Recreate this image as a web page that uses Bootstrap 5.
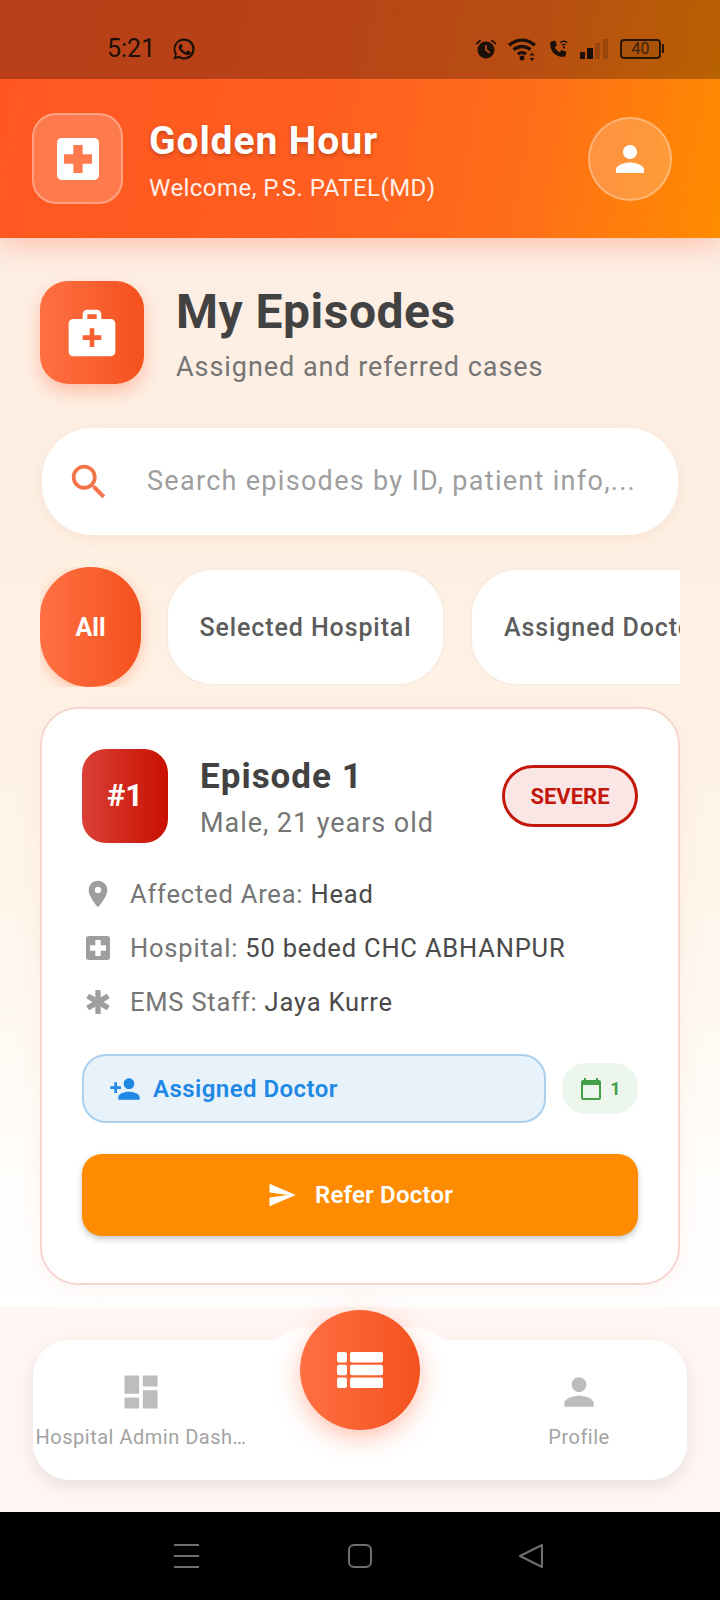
<!DOCTYPE html>
<html lang="en">
<head>
    <meta charset="UTF-8">
    <meta name="viewport" content="width=device-width, initial-scale=1">
    <title>Golden Hour - My Episodes</title>
    <link href="https://cdn.jsdelivr.net/npm/bootstrap@5.3.0/dist/css/bootstrap.min.css" rel="stylesheet">
    <style>
        body {
            font-family: "Roboto", "Liberation Sans", sans-serif;
            width: 720px;
            height: 1600px;
            overflow: hidden;
            background: #fff;
            color: #424242;
        }

        svg { fill: currentColor; display: block; flex-shrink: 0; }

        .app-screen { height: 1600px; }

        /* header + status bar share one gradient */
        .top-area {
            background: linear-gradient(100deg, #ff5722 0%, #ff5e20 45%, #ff6d1a 72%, #ff8c00 100%);
            box-shadow: 0 8px 26px rgba(255, 87, 34, .28);
            position: relative;
            z-index: 2;
        }
        .status-strip {
            height: 79px;
            padding: 18px 56px 0 107px;
            background: rgba(0, 0, 0, .28);
            color: #1d1008;
        }
        .status-time { font-size: 25px; line-height: 30px; width: 65px; }
        .status-icons { gap: 10px; }
        .batt-box {
            width: 41px;
            height: 20px;
            border: 2px solid #2a1505;
            border-radius: 4px;
            font-size: 16px;
            line-height: 16px;
            text-align: center;
            color: #3a2208;
            background: rgba(0, 0, 0, .08);
        }
        .batt-tip { width: 2px; height: 9px; background: #2a1505; margin-left: 1px; }

        .head-bar { height: 159px; padding: 0 48px 0 32px; color: #fff; }
        .head-logo {
            width: 91px;
            height: 91px;
            border-radius: 24px;
            background: rgba(255, 255, 255, .2);
            border: 2px solid rgba(255, 255, 255, .3);
        }
        .head-text { margin-left: 26px; padding-top: 4px; }
        .head-title { font-size: 39px; font-weight: 700; line-height: 44px; letter-spacing: .9px; text-shadow: 0 2px 4px rgba(0, 0, 0, .25); }
        .head-sub { font-size: 24px; line-height: 30px; margin-top: 10px; letter-spacing: .45px; color: rgba(255, 255, 255, .92); }
        .head-avatar {
            width: 84px;
            height: 84px;
            border-radius: 50%;
            background: rgba(255, 255, 255, .2);
            border: 2px solid rgba(255, 255, 255, .3);
        }

        .page-body {
            height: 1069px;
            padding: 43px 40px 0;
            background: linear-gradient(180deg, #fdeee5 0%, #fef0e2 35%, #fff5ea 60%, #fffdfb 88%, #ffffff 100%);
        }

        .sect-icon {
            width: 104px;
            height: 103px;
            border-radius: 28px;
            background: linear-gradient(90deg, #ff7043, #f4511e);
            box-shadow: 0 8px 18px rgba(255, 87, 34, .3);
            color: #fff;
        }
        .sect-text { padding-top: 2px; }
        .sect-title { font-size: 48px; font-weight: 700; line-height: 56px; letter-spacing: .5px; color: #424242; }
        .sect-sub { font-size: 27px; line-height: 32px; margin-top: 11px; letter-spacing: .95px; color: #757575; }

        .search-box {
            height: 107px;
            margin: 44px 2px 0;
            padding: 0 32px 0 24px;
            background: #fff;
            border-radius: 50px;
            box-shadow: 0 3px 14px rgba(190, 120, 80, .1);
        }
        .search-hint { margin-left: 35px; font-size: 27px; letter-spacing: 1.3px; color: #9e9e9e; white-space: nowrap; }

        .chip-strip { height: 120px; margin-top: 32px; overflow: hidden; gap: 25px; }
        .chip-item {
            height: 118px;
            margin-top: 1px;
            padding-top: 2px;
            border-radius: 48px;
            background: #fff;
            border: 2px solid #f9ece2;
            font-size: 25px;
            font-weight: 500;
            letter-spacing: .9px;
            color: #5c5c5c;
            white-space: nowrap;
            flex-shrink: 0;
        }
        .chip-on {
            width: 101px;
            height: 120px;
            margin-top: 0;
            border: 0;
            border-radius: 50px;
            background: linear-gradient(90deg, #ff7043, #f4511e);
            box-shadow: 0 4px 14px rgba(255, 87, 34, .3);
            color: #fff;
            font-weight: 700;
            letter-spacing: 0;
        }
        .chip-wide { width: 279px; }
        .chip-cut { width: 300px; padding-left: 32px; }

        .episode-card {
            margin: 20px 0 0;
            height: 578px;
            padding: 40px 40px 0;
            border: 2px solid #f7d6d0;
            border-radius: 38px;
            box-shadow: 0 8px 24px rgba(200, 120, 90, .07);
        }
        .num-tile {
            width: 86px;
            height: 94px;
            border-radius: 24px;
            background: linear-gradient(90deg, #da4038, #c91000);
            color: #fff;
            font-size: 31px;
            font-weight: 700;
        }
        .ep-text { padding-top: 3px; }
        .ep-title { font-size: 35px; font-weight: 700; line-height: 40px; letter-spacing: 1px; color: #424242; }
        .ep-sub { font-size: 27px; line-height: 32px; margin-top: 10px; letter-spacing: .95px; color: #757575; }
        .sev-pill {
            width: 136px;
            height: 62px;
            border: 3px solid #c4170c;
            border-radius: 32px;
            background: #fbe6e6;
            color: #c4170c;
            font-size: 22px;
            font-weight: 700;
        }

        .info-rows { margin: 24px 0 0; }
        .info-line { height: 54px; font-size: 25.5px; letter-spacing: .8px; color: #4a4a4a; gap: 16px; }
        .info-line svg { color: #9e9e9e; }
        .info-key { color: #757575; }

        .assign-row { margin-top: 25px; gap: 16px; }
        .assign-box {
            width: 464px;
            height: 69px;
            padding-left: 25px;
            gap: 12px;
            background: #e8f2fb;
            border: 2px solid #a9d0ef;
            border-radius: 24px;
            color: #1e88e5;
            font-size: 24px;
            font-weight: 600;
            letter-spacing: .45px;
        }
        .date-pill {
            width: 76px;
            height: 51px;
            gap: 7px;
            border-radius: 24px;
            background: #edf6ed;
            color: #43a047;
            font-size: 18px;
            font-weight: 700;
        }
        .refer-btn {
            height: 82px;
            margin-top: 31px;
            gap: 18px;
            border: 0;
            border-radius: 20px;
            background: #ff8c00;
            color: #fff;
            font-size: 24px;
            font-weight: 600;
            letter-spacing: .2px;
            box-shadow: 0 3px 6px rgba(0, 0, 0, .22);
        }
        .refer-btn:hover { background: #ff8c00; color: #fff; }

        .nav-area { height: 205px; padding: 33px 33px 0; background: #fff5f2; position: relative; z-index: 1; }
        .nav-panel {
            height: 140px;
            background: #fff;
            border-radius: 36px;
            box-shadow: 0 6px 16px rgba(0, 0, 0, .09);
        }
        .nav-bump { position: absolute; left: 272px; top: 15px; color: #fff; }
        .nav-fab {
            position: absolute;
            left: 300px;
            top: 3px;
            width: 120px;
            height: 120px;
            border-radius: 50%;
            background: linear-gradient(90deg, #ff7043, #f4511e);
            box-shadow: 0 8px 24px rgba(255, 87, 34, .35);
            color: #fff;
        }
        .nav-cell { color: #bdbdbd; padding-top: 30px; }
        .nav-left { width: 216px; }
        .nav-right { width: 216px; margin-left: auto; }
        .nav-label { font-size: 20px; line-height: 24px; margin-top: 11px; letter-spacing: .5px; color: #a3a3a3; white-space: nowrap; }

        .sys-bar { height: 88px; background: #000; color: #6f6f6f; padding: 0 175px 0 174px; }
    </style>
</head>
<body>
<div class="app-screen d-flex flex-column">

    <div class="top-area">
        <div class="status-strip d-flex align-items-center">
            <span class="status-time">5:21</span>
            <svg width="24" height="24" viewBox="0 0 24 24"><path d="M12 1.500A10.500 10.500 0 0 0 2.900 17.200L1.500 22.500l5.400-1.400A10.500 10.500 0 1 0 12 1.500zm0 2.200a8.300 8.300 0 1 1-4.500 15.300l-.4-.2-3 .8.8-3-.3-.4A8.300 8.300 0 0 1 12 3.700zM8.500 7.300c-.3 0-.6.1-.9.4-.4.5-1 1.200-1 2.400 0 1.400 1 2.800 1.200 3 .2.200 2 3.100 4.900 4.200 2.300.9 2.900.7 3.500.6.700-.1 1.900-.8 2.100-1.500.200-.7.200-1.300.2-1.400-.1-.2-.3-.2-.6-.4l-2-1c-.3-.1-.5-.1-.7.2l-.9 1.100c-.2.2-.4.3-.7.1-.3-.1-1.300-.5-2.400-1.500-.9-.8-1.500-1.800-1.700-2.100-.2-.3 0-.5.1-.6l.5-.6.3-.5v-.5l-.9-2.200c-.2-.5-.5-.6-.7-.6z"/></svg>
            <div class="status-icons ms-auto d-flex align-items-center">
                <svg width="24" height="24" viewBox="0 0 24 24"><path d="M12 4.500a8.500 8.500 0 1 0 0 17 8.500 8.500 0 0 0 0-17zm3.500 12L11 13.500V8h1.800v4.600l3.600 2.300z"/><path d="M1.500 6.500 6 2.500l1.200 1.300-4.500 4zM22.500 6.500l-4.500-4-1.200 1.300 4.500 4z"/></svg>
                <svg width="28" height="24" viewBox="0 0 28 24"><path d="M0 7C7.500-.5 20.500-.5 28 7l-2.400 2.500C19.400 3.200 8.600 3.200 2.400 9.500z"/><path d="M4.500 11.500c5.200-5 13.800-5 19 0l-2.400 2.400c-3.900-3.700-10.300-3.700-14.200 0z"/><path d="M8.800 16c2.900-2.700 7.500-2.700 10.400 0l-2.400 2.400c-1.600-1.400-4-1.400-5.600 0z"/><circle cx="14" cy="21" r="2.500"/><path d="M24 15.500l2.500 3h-5zM24 24l-2.500-3h5z"/></svg>
                <svg width="24" height="24" viewBox="0 0 26 26"><path d="M6.500 4.500 10 4l2 5-2.500 2c1.200 2.500 3 4.300 5.500 5.500l2-2.500 5 2-.5 3.500c-.2 1.300-1.300 2-2.500 2C10.500 21.500 4.500 15.500 4.500 7c0-1.200.7-2.300 2-2.500z"/><path d="M15 5.500c2.800-2.400 5.700-2.400 8.500 0l-1 1.200c-2.200-1.800-4.300-1.800-6.500 0zM17 8.200c1.500-1.200 3-1.200 4.500 0l-1 1.200c-.9-.7-1.600-.7-2.500 0z"/><circle cx="19.300" cy="11.300" r="1.200"/></svg>
                <svg width="30" height="24" viewBox="0 0 30 24"><rect x="0" y="15" width="5" height="7"/><rect x="7" y="11" width="6" height="11"/><rect x="15" y="6" width="5" height="16" opacity=".2"/><rect x="23" y="2" width="5" height="20" opacity=".2"/></svg>
                <div class="d-flex align-items-center">
                    <div class="batt-box">40</div>
                    <div class="batt-tip"></div>
                </div>
            </div>
        </div>
        <div class="head-bar d-flex align-items-center">
            <div class="head-logo d-flex align-items-center justify-content-center">
                <svg width="56" height="56" viewBox="0 0 24 24"><path d="M19 3H5c-1.100 0-1.990.9-1.990 2L3 19c0 1.100.9 2 2 2h14c1.100 0 2-.9 2-2V5c0-1.100-.9-2-2-2zm-1 11h-4v4h-4v-4H6v-4h4V6h4v4h4v4z"/></svg>
            </div>
            <div class="head-text">
                <div class="head-title">Golden Hour</div>
                <div class="head-sub">Welcome, P.S. PATEL(MD)</div>
            </div>
            <div class="head-avatar ms-auto d-flex align-items-center justify-content-center">
                <svg width="42" height="42" viewBox="0 0 24 24"><path d="M12 12c2.210 0 4-1.790 4-4s-1.790-4-4-4-4 1.790-4 4 1.790 4 4 4zm0 2c-2.670 0-8 1.340-8 4v2h16v-2c0-2.660-5.330-4-8-4z"/></svg>
            </div>
        </div>
    </div>

    <main class="page-body">
        <div class="d-flex align-items-center">
            <div class="sect-icon d-flex align-items-center justify-content-center">
                <svg width="56" height="56" viewBox="0 0 24 24"><path d="M20 6h-4V4c0-1.100-.9-2-2-2h-4c-1.100 0-2 .9-2 2v2H4c-1.100 0-2 .9-2 2v12c0 1.100.9 2 2 2h16c1.100 0 2-.9 2-2V8c0-1.100-.9-2-2-2zM10 4h4v2h-4V4zm6 11h-3v3h-2v-3H8v-2h3v-3h2v3h3v2z"/></svg>
            </div>
            <div class="sect-text ms-2 ps-4">
                <div class="sect-title">My Episodes</div>
                <div class="sect-sub">Assigned and referred cases</div>
            </div>
        </div>

        <div class="search-box d-flex align-items-center">
            <svg style="color:#f4744a" width="46" height="46" viewBox="0 0 24 24"><path d="M15.500 14h-.79l-.28-.27C15.410 12.590 16 11.110 16 9.500 16 5.910 13.090 3 9.500 3S3 5.910 3 9.500 5.910 16 9.500 16c1.610 0 3.090-.59 4.230-1.570l.27.28v.79l5 4.990L20.490 19l-4.990-5zm-6 0C7.010 14 5 11.990 5 9.500S7.010 5 9.500 5 14 7.010 14 9.500 11.990 14 9.500 14z"/></svg>
            <span class="search-hint">Search episodes by ID, patient info,...</span>
        </div>

        <div class="chip-strip d-flex">
            <div class="chip-item chip-on d-flex align-items-center justify-content-center">All</div>
            <div class="chip-item chip-wide d-flex align-items-center justify-content-center">Selected Hospital</div>
            <div class="chip-item chip-cut d-flex align-items-center">Assigned Doctor</div>
        </div>

        <div class="card episode-card">
            <div class="d-flex align-items-center">
                <div class="num-tile d-flex align-items-center justify-content-center">#1</div>
                <div class="ep-text ms-4 ps-2">
                    <div class="ep-title">Episode 1</div>
                    <div class="ep-sub">Male, 21 years old</div>
                </div>
                <div class="sev-pill ms-auto d-flex align-items-center justify-content-center">SEVERE</div>
            </div>

            <ul class="info-rows list-unstyled">
                <li class="info-line d-flex align-items-center">
                    <svg width="32" height="32" viewBox="0 0 24 24"><path d="M12 2C8.130 2 5 5.130 5 9c0 5.250 7 13 7 13s7-7.750 7-13c0-3.870-3.130-7-7-7zm0 9.500c-1.380 0-2.500-1.120-2.500-2.500s1.120-2.500 2.500-2.500 2.500 1.120 2.500 2.500-1.120 2.500-2.500 2.500z"/></svg>
                    <span><span class="info-key">Affected Area:</span> Head</span>
                </li>
                <li class="info-line d-flex align-items-center">
                    <svg width="32" height="32" viewBox="0 0 24 24"><path d="M19 3H5c-1.100 0-1.990.9-1.990 2L3 19c0 1.100.9 2 2 2h14c1.100 0 2-.9 2-2V5c0-1.100-.9-2-2-2zm-1 11h-4v4h-4v-4H6v-4h4V6h4v4h4v4z"/></svg>
                    <span><span class="info-key">Hospital:</span> 50 beded CHC ABHANPUR</span>
                </li>
                <li class="info-line d-flex align-items-center">
                    <svg width="32" height="32" viewBox="0 0 24 24"><rect x="10" y="3" width="4" height="18" rx=".6"/><rect x="10" y="3" width="4" height="18" rx=".6" transform="rotate(60 12 12)"/><rect x="10" y="3" width="4" height="18" rx=".6" transform="rotate(120 12 12)"/></svg>
                    <span><span class="info-key">EMS Staff:</span> Jaya Kurre</span>
                </li>
            </ul>

            <div class="assign-row d-flex align-items-center">
                <div class="assign-box d-flex align-items-center">
                    <svg width="32" height="32" viewBox="0 0 24 24"><path d="M15 12c2.210 0 4-1.790 4-4s-1.790-4-4-4-4 1.790-4 4 1.790 4 4 4zm-9-2V7H4v3H1v2h3v3h2v-3h3v-2H6zm9 4c-2.670 0-8 1.340-8 4v2h16v-2c0-2.660-5.330-4-8-4z"/></svg>
                    <span>Assigned Doctor</span>
                </div>
                <div class="date-pill d-flex align-items-center justify-content-center">
                    <svg width="24" height="24" viewBox="0 0 24 24"><path d="M20 3h-1V1h-2v2H7V1H5v2H4c-1.100 0-2 .9-2 2v16c0 1.100.9 2 2 2h16c1.100 0 2-.9 2-2V5c0-1.100-.9-2-2-2zm0 18H4V8h16v13z"/></svg>
                    <span>1</span>
                </div>
            </div>

            <button class="btn refer-btn w-100 d-flex align-items-center justify-content-center" type="button">
                <svg width="30" height="30" viewBox="0 0 24 24"><path d="M2.010 21 23 12 2.010 3 2 10l15 2-15 2z"/></svg>
                <span>Refer Doctor</span>
            </button>
        </div>
    </main>

    <div class="nav-area">
        <svg class="nav-bump" width="176" height="20" viewBox="0 0 176 20"><path d="M0 19C10 14 20 8 30 5.500L146 5.500C156 8 166 14 176 19v1H0z"/></svg>
        <div class="nav-panel d-flex">
            <div class="nav-cell nav-left d-flex flex-column align-items-center">
                <svg width="44" height="44" viewBox="0 0 24 24"><path d="M3 13h8V3H3v10zm0 8h8v-6H3v6zm10 0h8V11h-8v10zm0-18v6h8V3h-8z"/></svg>
                <div class="nav-label">Hospital Admin Dash…</div>
            </div>
            <div class="nav-cell nav-right d-flex flex-column align-items-center">
                <svg width="44" height="44" viewBox="0 0 24 24"><path d="M12 12c2.210 0 4-1.790 4-4s-1.790-4-4-4-4 1.790-4 4 1.790 4 4 4zm0 2c-2.670 0-8 1.340-8 4v2h16v-2c0-2.660-5.330-4-8-4z"/></svg>
                <div class="nav-label">Profile</div>
            </div>
        </div>
        <div class="nav-fab d-flex align-items-center justify-content-center">
            <svg width="46" height="36" viewBox="0 0 46 36">
                <rect x="0" y="0" width="10" height="10.600" rx="2"/><rect x="13" y="0" width="33" height="10.600" rx="2"/>
                <rect x="0" y="12.700" width="10" height="10.600" rx="2"/><rect x="13" y="12.700" width="33" height="10.600" rx="2"/>
                <rect x="0" y="25.400" width="10" height="10.600" rx="2"/><rect x="13" y="25.400" width="33" height="10.600" rx="2"/>
            </svg>
        </div>
    </div>

    <div class="sys-bar d-flex align-items-center justify-content-between">
        <svg width="26" height="26" viewBox="0 0 26 26"><rect x="0" y="1" width="25" height="2"/><rect x="0" y="12" width="25" height="2"/><rect x="0" y="23" width="25" height="2"/></svg>
        <svg width="26" height="26" viewBox="0 0 26 26"><rect x="2" y="2" width="22" height="22" rx="5" fill="none" stroke="currentColor" stroke-width="2"/></svg>
        <svg width="26" height="26" viewBox="0 0 26 26"><path d="M23 2v22L1 13z" fill="none" stroke="currentColor" stroke-width="2" stroke-linejoin="round"/></svg>
    </div>
</div>
<script src="https://cdn.jsdelivr.net/npm/bootstrap@5.3.0/dist/js/bootstrap.bundle.min.js"></script>
</body>
</html>
